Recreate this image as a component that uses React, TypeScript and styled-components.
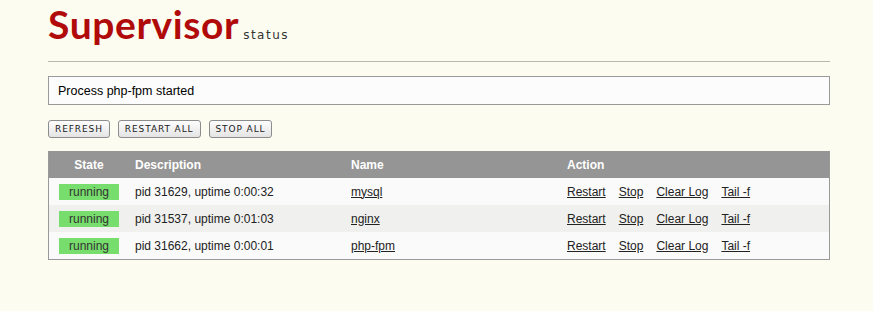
import React from 'react'
import styled, { createGlobalStyle } from 'styled-components'

const GlobalStyle = createGlobalStyle`
  html, body {
    margin: 0;
    padding: 0;
    background: #fcfcf1;
    font-family: "Liberation Sans", Arial, sans-serif;
    color: #000;
  }
`

const Page = styled.div`
  width: 782px;
  margin-left: 48px;
`

const Header = styled.header`
  display: flex;
  align-items: baseline;
  height: 62px;
  border-bottom: 1px solid #b8b8b0;
  box-sizing: border-box;
  padding-top: 2px;
`

const Logo = styled.h1`
  margin: 0;
  font-family: Lato, "DejaVu Sans", sans-serif;
  font-weight: 700;
  font-size: 39px;
  line-height: 44px;
  letter-spacing: 0.6px;
  color: #b10a0a;
`

const LogoSub = styled.span`
  margin-left: 4px;
  font-family: "DejaVu Sans", sans-serif;
  font-size: 12px;
  letter-spacing: 1.5px;
  color: #333;
`

const Message = styled.div`
  margin-top: 14px;
  height: 29px;
  box-sizing: border-box;
  border: 1px solid #9a9a9a;
  background: #fcfcfc;
  padding: 0 9px;
  display: flex;
  align-items: center;
  font-size: 12.5px;
`

const Buttons = styled.div`
  display: flex;
  gap: 8px;
  margin-top: 15px;
`

const Button = styled.button`
  margin: 0;
  height: 18px;
  box-sizing: border-box;
  padding: 0 6px;
  border: 1px solid #8c8c8c;
  border-radius: 3px;
  background: linear-gradient(#fdfdfd, #e4e4e4);
  font-family: "DejaVu Sans", sans-serif;
  font-size: 9px;
  letter-spacing: 0.9px;
  color: #222;
  cursor: pointer;
`

const Table = styled.div`
  margin-top: 13px;
  border: 1px solid #999;
  border-top: none;
`

const Row = styled.div<{ $head?: boolean; $alt?: boolean }>`
  display: grid;
  grid-template-columns: 80px 216px 216px 1fr;
  align-items: center;
  height: 27px;
  background: ${(p) => (p.$head ? '#959595' : p.$alt ? '#f0f0ee' : '#fafafa')};
  color: ${(p) => (p.$head ? '#fff' : '#222')};
  font-weight: ${(p) => (p.$head ? 700 : 400)};
  font-size: 12px;
`

const Cell = styled.div<{ $center?: boolean }>`
  padding: 0 6px;
  display: flex;
  gap: 13px;
  justify-content: ${(p) => (p.$center ? 'center' : 'flex-start')};
`

const Status = styled.span`
  display: inline-block;
  width: 60px;
  height: 16px;
  line-height: 16px;
  background: #77dd6c;
  color: #333;
  text-align: center;
`

const Link = styled.a`
  color: #222;
  text-decoration: underline;
  cursor: pointer;
`

const processes = [
  { name: 'mysql', desc: 'pid 31629, uptime 0:00:32' },
  { name: 'nginx', desc: 'pid 31537, uptime 0:01:03' },
  { name: 'php-fpm', desc: 'pid 31662, uptime 0:00:01' },
]

export default function App() {
  return (
    <Page>
      <GlobalStyle />
      <Header>
        <Logo>Supervisor</Logo>
        <LogoSub>status</LogoSub>
      </Header>
      <Message>Process php-fpm started</Message>
      <Buttons>
        <Button>REFRESH</Button>
        <Button>RESTART ALL</Button>
        <Button>STOP ALL</Button>
      </Buttons>
      <Table>
        <Row $head>
          <Cell $center>State</Cell>
          <Cell>Description</Cell>
          <Cell>Name</Cell>
          <Cell>Action</Cell>
        </Row>
        {processes.map((p, i) => (
          <Row key={p.name} $alt={i % 2 === 1}>
            <Cell $center>
              <Status>running</Status>
            </Cell>
            <Cell>{p.desc}</Cell>
            <Cell>
              <Link>{p.name}</Link>
            </Cell>
            <Cell>
              <Link>Restart</Link>
              <Link>Stop</Link>
              <Link>Clear Log</Link>
              <Link>Tail -f</Link>
            </Cell>
          </Row>
        ))}
      </Table>
    </Page>
  )
}
